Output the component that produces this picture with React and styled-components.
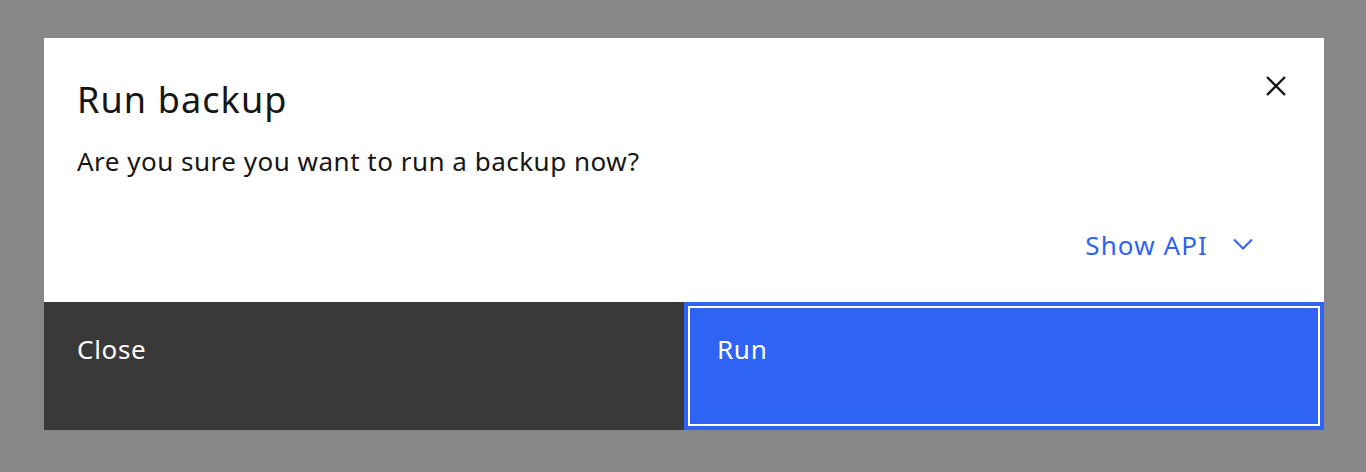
import React from "react"
import styled, { createGlobalStyle } from "styled-components"

const GlobalStyle = createGlobalStyle`
  html, body {
    margin: 0;
    padding: 0;
    background: #878787;
    font-family: "Noto Sans", "Open Sans", sans-serif;
  }
`

const Overlay = styled.div`
  height: 472px;
  padding: 38px 42px 42px 44px;
  box-sizing: border-box;
`

const Modal = styled.div`
  position: relative;
  width: 1280px;
  height: 392px;
  background: #ffffff;
  display: flex;
  flex-direction: column;
`

const Header = styled.div`
  padding: 40px 33px 0 33px;
`

const Title = styled.h2`
  margin: 0;
  font-size: 36px;
  font-weight: 400;
  line-height: 44px;
  letter-spacing: 1.1px;
  color: #161616;
`

const Body = styled.p`
  margin: 23px 0 0 0;
  padding: 0 33px;
  font-size: 26px;
  line-height: 32px;
  letter-spacing: 0.5px;
  color: #161616;
`

const ApiRow = styled.div`
  display: flex;
  justify-content: flex-end;
  padding: 0 71px 0 0;
  margin-top: 52px;
  flex: 1;
`

const ApiLink = styled.button`
  display: flex;
  align-items: center;
  gap: 25px;
  height: 32px;
  border: 0;
  padding: 0;
  background: none;
  color: #2e63f4;
  font-family: inherit;
  font-size: 26px;
  line-height: 32px;
  letter-spacing: 1.1px;
  cursor: pointer;

  svg {
    margin-top: -2px;
  }
`

const CloseIcon = styled.button`
  position: absolute;
  top: 28px;
  right: 28px;
  width: 40px;
  height: 40px;
  display: flex;
  align-items: center;
  justify-content: center;
  border: 0;
  padding: 0;
  background: none;
  color: #161616;
  cursor: pointer;
`

const Footer = styled.div`
  display: grid;
  grid-template-columns: 1fr 1fr;
  height: 128px;
`

const FooterButton = styled.button`
  display: flex;
  align-items: flex-start;
  padding: 31px 33px;
  border: 0;
  font-family: inherit;
  font-size: 26px;
  line-height: 32px;
  letter-spacing: 0.7px;
  color: #ffffff;
  text-align: left;
  cursor: pointer;
  background: ${(p) => (p.$primary ? "#2e63f4" : "#393939")};
  box-shadow: ${(p) =>
    p.$focused
      ? "inset 0 0 0 4px #2e63f4, inset 0 0 0 6px #ffffff"
      : "none"};
`

const App = () => (
  <>
    <GlobalStyle />
    <Overlay>
      <Modal>
        <CloseIcon aria-label="Close">
          <svg width="22" height="22" viewBox="0 0 22 22">
            <path
              d="M2 2L20 20M20 2L2 20"
              stroke="currentColor"
              strokeWidth="2.4"
            />
          </svg>
        </CloseIcon>
        <Header>
          <Title>Run backup</Title>
        </Header>
        <Body>Are you sure you want to run a backup now?</Body>
        <ApiRow>
          <ApiLink>
            Show API
            <svg width="20" height="12" viewBox="0 0 20 12">
              <path
                d="M1 1.5L10 10.5L19 1.5"
                fill="none"
                stroke="currentColor"
                strokeWidth="2"
              />
            </svg>
          </ApiLink>
        </ApiRow>
        <Footer>
          <FooterButton>Close</FooterButton>
          <FooterButton $primary $focused>
            Run
          </FooterButton>
        </Footer>
      </Modal>
    </Overlay>
  </>
)

export default App
